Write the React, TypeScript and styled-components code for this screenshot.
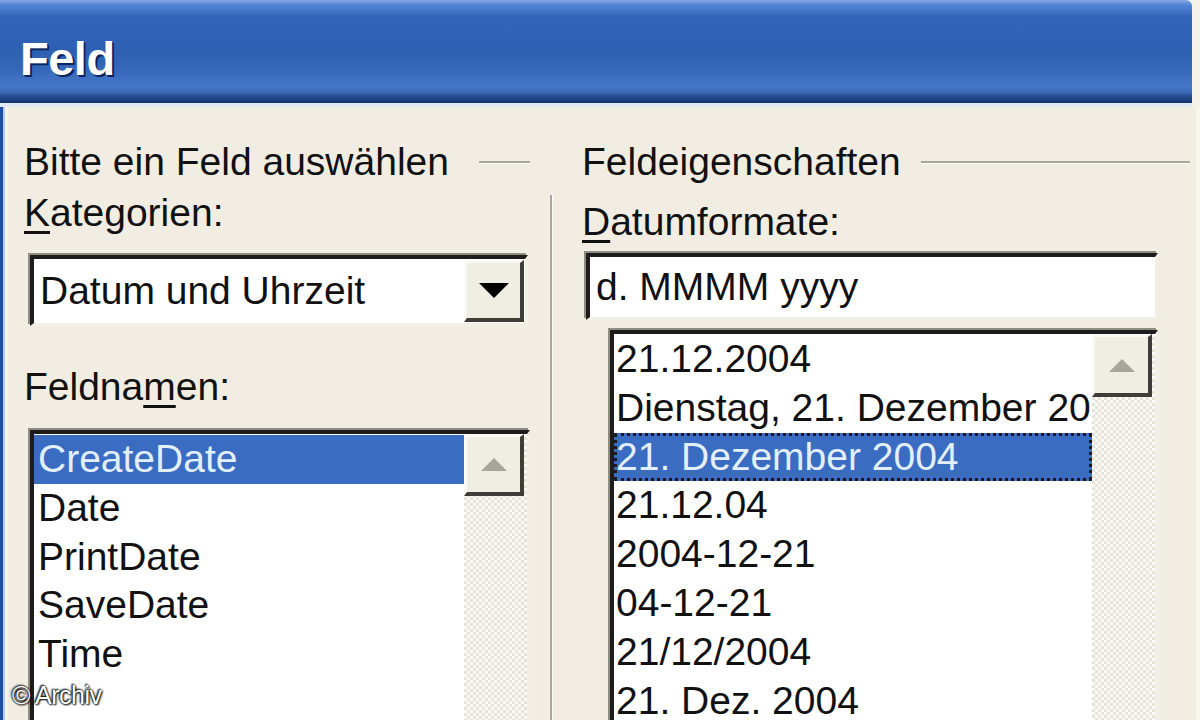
import React from "react";
import styled, { createGlobalStyle } from "styled-components";

const GlobalStyle = createGlobalStyle`
  html, body {
    margin: 0;
    padding: 0;
    background: #f4f1e8;
  }
  * { box-sizing: border-box; }
`;

const Screen = styled.div`
  position: relative;
  width: 1200px;
  height: 720px;
  overflow: hidden;
  background: #f4f1e8;
  font-family: "Liberation Sans", Arial, sans-serif;
  color: #111;
  display: flex;
  flex-direction: column;
`;

const TitleBar = styled.div`
  flex: none;
  height: 103px;
  margin-right: 8px;
  border-top-right-radius: 6px;
  display: flex;
  align-items: center;
  padding: 14px 0 0 20px;
  background: linear-gradient(
    180deg,
    #86a8e6 0px,
    #5585d6 5px,
    #3366b9 16px,
    #2d60b1 50px,
    #3668ba 70px,
    #4676c8 86px,
    #3c69b8 92px,
    #234a8e 97px,
    #12306a 103px
  );
`;

const Title = styled.span`
  font-family: "Liberation Sans", Arial, sans-serif;
  font-weight: 700;
  font-size: 47px;
  color: #ffffff;
  letter-spacing: -0.5px;
  text-shadow: 2px 2px 0 #0c245c, 1px 1px 0 #0c245c;
`;

const TitleEdge = styled.div`
  flex: none;
  height: 4px;
  margin-right: 8px;
  background: #dfe7f1;
`;

const Frame = styled.div`
  flex: 1;
  min-height: 0;
  display: flex;
  padding-left: 8px;
  background: linear-gradient(90deg, #1f4fa3 0 3px, #b9cbe9 3px 5px, #f7f4ec 5px 8px);
`;

const Body = styled.div`
  flex: 1;
  min-width: 0;
  display: flex;
  align-items: flex-start;
  padding: 31px 0 0 16px;
  background: #f1ede2;
  border-right: 4px solid #f8f6ef;
  overflow: hidden;
`;

const Column = styled.div<{ $width: number; $offset?: number }>`
  flex: none;
  min-width: 0;
  display: flex;
  flex-direction: column;
  width: ${({ $width }) => $width}px;
  margin-left: ${({ $offset }) => $offset ?? 0}px;
`;

const GroupHeader = styled.div<{ $gap: number }>`
  flex: none;
  display: flex;
  align-items: center;
  height: 48px;
  font-size: 39px;
  gap: ${({ $gap }) => $gap}px;
  white-space: nowrap;
`;

const GroupLine = styled.div`
  flex: 1;
  height: 3px;
  border-top: 2px solid #a9a69a;
  border-bottom: 1px solid #ffffff;
`;

const Label = styled.div<{ $top: number }>`
  flex: none;
  margin-top: ${({ $top }) => $top}px;
  height: 48px;
  line-height: 48px;
  font-size: 39px;
  white-space: nowrap;
`;

const Key = styled.span`
  text-decoration: underline;
  text-underline-offset: 5px;
  text-decoration-thickness: 3px;
`;

const Sunken = styled.div<{ $top: number; $left: number; $right: number; $height: number }>`
  flex: none;
  margin-top: ${({ $top }) => $top}px;
  margin-left: ${({ $left }) => $left}px;
  margin-right: ${({ $right }) => $right}px;
  height: ${({ $height }) => $height}px;
  background: #ffffff;
  border-top: 4px solid #1c1c1c;
  border-left: 4px solid #1c1c1c;
  border-right: 3px solid #f2efe4;
  border-bottom: 3px solid #f2efe4;
  box-shadow: -2px -2px 0 #8f8c80;
  display: flex;
  align-items: flex-start;
  overflow: hidden;
`;

const FieldText = styled.div`
  flex: 1;
  align-self: stretch;
  display: flex;
  align-items: center;
  padding-left: 6px;
  font-size: 39px;
  white-space: nowrap;
`;

const Raised = styled.div<{ $height: number }>`
  width: 60px;
  height: ${({ $height }) => $height}px;
  flex: none;
  display: flex;
  align-items: center;
  justify-content: center;
  background: #f0ede3;
  border-top: 3px solid #faf9f4;
  border-left: 3px solid #faf9f4;
  border-right: 4px solid #3e3d38;
  border-bottom: 4px solid #3e3d38;
`;

const DropArrow = styled.div`
  width: 0;
  height: 0;
  border-left: 15px solid transparent;
  border-right: 15px solid transparent;
  border-top: 15px solid #000;
`;

const UpArrow = styled.div`
  width: 0;
  height: 0;
  border-left: 13px solid transparent;
  border-right: 13px solid transparent;
  border-bottom: 13px solid #a8a59b;
`;

const ComboButtonWrap = styled.div`
  align-self: stretch;
  display: flex;
  align-items: center;
  padding-right: 1px;
`;

const Items = styled.div`
  flex: 1;
  min-width: 0;
  display: flex;
  flex-direction: column;
  padding-top: 1px;
  overflow: hidden;
`;

const Item = styled.div<{ $selected?: boolean; $focus?: boolean; $pad: number }>`
  flex: none;
  height: 48.8px;
  line-height: 48.8px;
  font-size: 39px;
  white-space: nowrap;
  overflow: hidden;
  padding-left: ${({ $pad }) => $pad}px;
  background: ${({ $selected }) => ($selected ? "#3a6cc2" : "transparent")};
  color: ${({ $selected }) => ($selected ? "#e2efff" : "#111")};
  outline: ${({ $focus }) => ($focus ? "3px dotted #1a1a1a" : "none")};
  outline-offset: -3px;
`;

const Scrollbar = styled.div`
  width: 63px;
  align-self: stretch;
  flex: none;
  display: flex;
  flex-direction: column;
  background-color: #fbfaf6;
  background-image: repeating-conic-gradient(#e6e3d7 0 25%, #fbfaf6 0 50%);
  background-size: 6px 6px;
`;

const Separator = styled.div`
  flex: none;
  width: 3px;
  height: 560px;
  margin: 57px 0 0 20px;
  border-left: 2px solid #a9a69a;
  border-right: 1px solid #ffffff;
`;

const Watermark = styled.div`
  position: absolute;
  left: 12px;
  bottom: 10px;
  font-family: "Liberation Sans", Arial, sans-serif;
  font-size: 25px;
  color: #ffffff;
  text-shadow: 0 0 2px #000, 1px 1px 2px #000, -1px -1px 2px #000;
  letter-spacing: -0.5px;
`;

const fieldNames = ["CreateDate", "Date", "PrintDate", "SaveDate", "Time"];

const dateFormats = [
  "21.12.2004",
  "Dienstag, 21. Dezember 2004",
  "21. Dezember 2004",
  "21.12.04",
  "2004-12-21",
  "04-12-21",
  "21/12/2004",
  "21. Dez. 2004",
];

export default function App() {
  return (
    <Screen>
      <GlobalStyle />
      <TitleBar>
        <Title>Feld</Title>
      </TitleBar>
      <TitleEdge />
      <Frame>
        <Body>
          <Column $width={506}>
            <GroupHeader $gap={30}>
              <span>Bitte ein Feld auswählen</span>
              <GroupLine />
            </GroupHeader>
            <Label $top={3}>
              <Key>K</Key>ategorien:
            </Label>
            <Sunken $top={18} $left={6} $right={2} $height={71}>
              <FieldText>Datum und Uhrzeit</FieldText>
              <ComboButtonWrap>
                <Raised $height={62}>
                  <DropArrow />
                </Raised>
              </ComboButtonWrap>
            </Sunken>
            <Label $top={37}>
              Feldna<Key>m</Key>en:
            </Label>
            <Sunken $top={19} $left={6} $right={0} $height={320}>
              <Items>
                {fieldNames.map((name, i) => (
                  <Item key={name} $pad={4} $selected={i === 0}>
                    {name}
                  </Item>
                ))}
              </Items>
              <Scrollbar>
                <Raised $height={62}>
                  <UpArrow />
                </Raised>
              </Scrollbar>
            </Sunken>
          </Column>
          <Separator />
          <Column $width={608} $offset={29}>
            <GroupHeader $gap={20}>
              <span>Feldeigenschaften</span>
              <GroupLine />
            </GroupHeader>
            <Label $top={12}>
              <Key>D</Key>atumformate:
            </Label>
            <Sunken $top={7} $left={4} $right={32} $height={67}>
              <FieldText>d. MMMM yyyy</FieldText>
            </Sunken>
            <Sunken $top={10} $left={28} $right={32} $height={420}>
              <Items>
                {dateFormats.map((f, i) => (
                  <Item key={f} $pad={2} $selected={i === 2} $focus={i === 2}>
                    {f}
                  </Item>
                ))}
              </Items>
              <Scrollbar>
                <Raised $height={63}>
                  <UpArrow />
                </Raised>
              </Scrollbar>
            </Sunken>
          </Column>
        </Body>
      </Frame>
      <Watermark>© Archiv</Watermark>
    </Screen>
  );
}
